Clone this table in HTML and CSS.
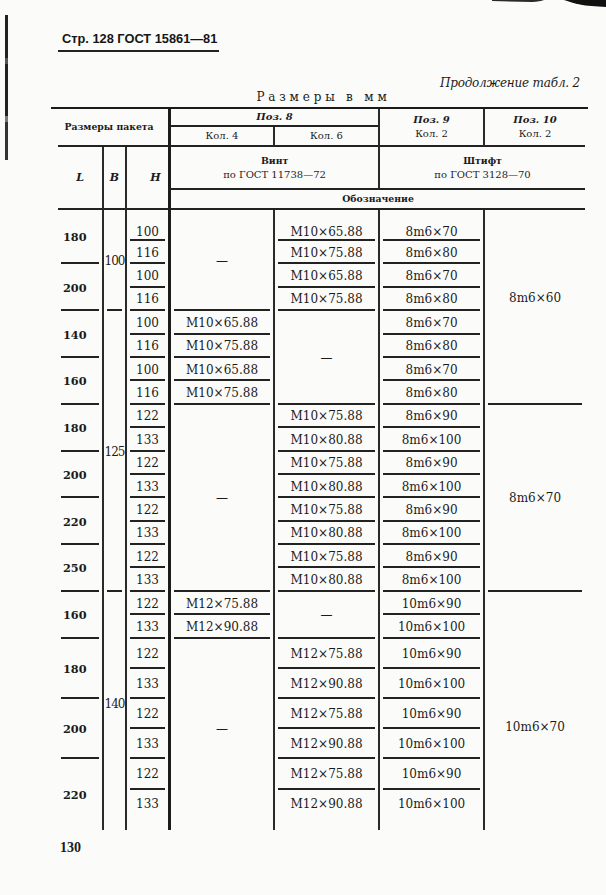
FILE: index.html
```html
<!DOCTYPE html>
<html lang="ru">
<head>
<meta charset="utf-8">
<title>ГОСТ 15861—81, стр. 128</title>
<link rel="stylesheet" href="styles.css">
</head>
<body>
<div class="scan-edge"></div>
<svg class="scan-corner" viewBox="0 0 120 10" aria-hidden="true">
  <path d="M6 0 H58 Q54 1.6 46 2 L6 1 Z" fill="#2a2a2a"/>
  <path d="M78 0 H120 V7 Q104 6.6 94 4.6 Q84 2.2 78 0 Z" fill="#111"/>
</svg>
<main class="page">
  <div class="runhead">Стр. 128 ГОСТ 15861—81</div>
  <div class="cont">Продолжение табл. 2</div>
  <div class="units">Размеры в мм</div>
  <div class="rule"></div>
  <table class="t">
    <colgroup>
      <col class="c-l"><col class="c-b"><col class="c-h"><col class="c-k4"><col class="c-k6"><col class="c-p9"><col class="c-p10">
    </colgroup>
    <thead>
      <tr class="hA">
        <th colspan="3" rowspan="2" class="hb bb pk">Размеры пакета</th>
        <th colspan="2" class="vl3 bb"><span class="poz">Поз. 8</span></th>
        <th rowspan="2" class="vl bb"><span class="poz">Поз. 9</span><br>Кол. 2</th>
        <th rowspan="2" class="vl bb"><span class="poz">Поз. 10</span><br>Кол. 2</th>
      </tr>
      <tr class="hB">
        <th class="vl3 bb">Кол. 4</th>
        <th class="vl bb">Кол. 6</th>
      </tr>
      <tr class="hC">
        <th rowspan="2" class="bb ax">L</th>
        <th rowspan="2" class="vl bb ax">B</th>
        <th rowspan="2" class="vl bb ax hh">H</th>
        <th colspan="2" class="vl3 bb"><span class="hb">Винт</span><br>по ГОСТ 11738—72</th>
        <th colspan="2" class="vl bb"><span class="hb">Штифт</span><br>по ГОСТ 3128—70</th>
      </tr>
      <tr class="hD">
        <th colspan="4" class="vl3 bb hb">Обозначение</th>
      </tr>
    </thead>
    <tbody>
      <tr class="r1">
        <td rowspan="2" class="lv u">180</td>
        <td rowspan="4" class="vl u bv">100</td>
        <td class="vl u p1">100</td>
        <td rowspan="4" class="vl3 u">—</td>
        <td class="vl u p1">M10×65.88</td>
        <td class="vl u p1">8m6×70</td>
        <td rowspan="8" class="vl u pz1">8m6×60</td>
      </tr>
      <tr class="r"><td class="vl u">116</td><td class="vl u">M10×75.88</td><td class="vl u">8m6×80</td></tr>
      <tr class="r"><td rowspan="2" class="lv u">200</td><td class="vl u">100</td><td class="vl u">M10×65.88</td><td class="vl u">8m6×70</td></tr>
      <tr class="r"><td class="vl u">116</td><td class="vl u">M10×75.88</td><td class="vl u">8m6×80</td></tr>
      <tr class="r">
        <td rowspan="2" class="lv u">140</td>
        <td rowspan="12" class="vl u bv">125</td>
        <td class="vl u">100</td>
        <td class="vl3 u">M10×65.88</td>
        <td rowspan="4" class="vl u">—</td>
        <td class="vl u">8m6×70</td>
      </tr>
      <tr class="r"><td class="vl u">116</td><td class="vl3 u">M10×75.88</td><td class="vl u">8m6×80</td></tr>
      <tr class="r"><td rowspan="2" class="lv u">160</td><td class="vl u">100</td><td class="vl3 u">M10×65.88</td><td class="vl u">8m6×70</td></tr>
      <tr class="r"><td class="vl u">116</td><td class="vl3 u">M10×75.88</td><td class="vl u">8m6×80</td></tr>
      <tr class="r">
        <td rowspan="2" class="lv u">180</td>
        <td class="vl u">122</td>
        <td rowspan="8" class="vl3 u">—</td>
        <td class="vl u">M10×75.88</td>
        <td class="vl u">8m6×90</td>
        <td rowspan="8" class="vl u">8m6×70</td>
      </tr>
      <tr class="r"><td class="vl u">133</td><td class="vl u">M10×80.88</td><td class="vl u">8m6×100</td></tr>
      <tr class="r"><td rowspan="2" class="lv u">200</td><td class="vl u">122</td><td class="vl u">M10×75.88</td><td class="vl u">8m6×90</td></tr>
      <tr class="r"><td class="vl u">133</td><td class="vl u">M10×80.88</td><td class="vl u">8m6×100</td></tr>
      <tr class="r"><td rowspan="2" class="lv u">220</td><td class="vl u">122</td><td class="vl u">M10×75.88</td><td class="vl u">8m6×90</td></tr>
      <tr class="r"><td class="vl u">133</td><td class="vl u">M10×80.88</td><td class="vl u">8m6×100</td></tr>
      <tr class="r"><td rowspan="2" class="lv u">250</td><td class="vl u">122</td><td class="vl u">M10×75.88</td><td class="vl u">8m6×90</td></tr>
      <tr class="r"><td class="vl u">133</td><td class="vl u">M10×80.88</td><td class="vl u">8m6×100</td></tr>
      <tr class="r">
        <td rowspan="2" class="lv u">160</td>
        <td rowspan="8" class="vl bv b140">140</td>
        <td class="vl u">122</td>
        <td class="vl3 u">M12×75.88</td>
        <td rowspan="2" class="vl u">—</td>
        <td class="vl u">10m6×90</td>
        <td rowspan="8" class="vl pz3">10m6×70</td>
      </tr>
      <tr class="r"><td class="vl u">133</td><td class="vl3 u">M12×90.88</td><td class="vl u">10m6×100</td></tr>
      <tr class="rw">
        <td rowspan="2" class="lv u">180</td>
        <td class="vl u">122</td>
        <td rowspan="6" class="vl3 k4last">—</td>
        <td class="vl u">M12×75.88</td>
        <td class="vl u">10m6×90</td>
      </tr>
      <tr class="rw"><td class="vl u">133</td><td class="vl u">M12×90.88</td><td class="vl u">10m6×100</td></tr>
      <tr class="rw"><td rowspan="2" class="lv u">200</td><td class="vl u">122</td><td class="vl u">M12×75.88</td><td class="vl u">10m6×90</td></tr>
      <tr class="rw"><td class="vl u">133</td><td class="vl u">M12×90.88</td><td class="vl u">10m6×100</td></tr>
      <tr class="rw2"><td rowspan="2" class="lv l220">220</td><td class="vl u">122</td><td class="vl u">M12×75.88</td><td class="vl u">10m6×90</td></tr>
      <tr class="rl"><td class="vl">133</td><td class="vl">M12×90.88</td><td class="vl">10m6×100</td></tr>
    </tbody>
  </table>
  <div class="folio">130</div>
</main>
</body>
</html>
```

FILE: styles.css
```css
html, body {
  margin: 0;
  padding: 0;
}

body {
  width: 606px;
  height: 895px;
  position: relative;
  overflow: hidden;
  background: #fbfbfa;
  color: #1b1b1b;
  font-family: "DejaVu Serif", "Liberation Serif", serif;
}

.scan-edge {
  position: absolute;
  left: 5px;
  top: 15px;
  width: 3px;
  height: 145px;
  background: linear-gradient(#222 0 30%, #555 30% 34%, #222 34% 70%, #777 70% 74%, #333 74% 100%);
}

.scan-corner {
  position: absolute;
  top: 0;
  right: 0;
  width: 120px;
  height: 10px;
}

.page {
  padding: 31px 21px 0 58px;
}

.runhead {
  display: block;
  width: fit-content;
  font: bold 12.8px/16px "Liberation Sans", Arial, sans-serif;
  padding: 0 2px 3px 4px;
  border-bottom: 2px solid #222;
  color: #161616;
}

.cont {
  margin-top: 24px;
  text-align: right;
  padding-right: 5px;
  font: italic 12px/14px "DejaVu Serif", serif;
  letter-spacing: -0.2px;
}

.units {
  text-align: center;
  font-size: 12px;
  line-height: 14px;
  letter-spacing: 3.8px;
  padding-left: 4px;
}

.rule {
  margin: 3px -3px 0 -7px;
  height: 2px;
  background: #1a1a1a;
}

.t {
  border-collapse: separate;
  border-spacing: 0;
  table-layout: fixed;
  width: 527px;
}

.c-l { width: 44px; }
.c-b { width: 23px; }
.c-h { width: 43px; }
.c-k4 { width: 105px; }
.c-k6 { width: 105px; }
.c-p9 { width: 105px; }
.c-p10 { width: 102px; }

.t th,
.t td {
  padding: 0;
  box-sizing: border-box;
  text-align: center;
  vertical-align: middle;
  font-weight: normal;
  white-space: nowrap;
}

.t th {
  font-size: 10px;
  line-height: 14px;
}

.t td {
  font-size: 12px;
  line-height: 14px;
}

.vl { border-left: 2px solid #2a2a2a; }
.vl3 { border-left: 3px solid #1c1c1c; }
.bb { border-bottom: 2px solid #222; }

.t .hb { font-weight: bold; font-size: 9.3px; }
.poz { font-style: italic; font-weight: bold; }
.t th.pk { padding-right: 8px; }
.t th.ax { font-style: italic; font-weight: bold; font-size: 11px; }
.t th.hh { padding-left: 16px; }

.hA { height: 18px; }
.hB { height: 20px; }
.hC { height: 43px; }
.hD { height: 20px; }

.r1 { height: 31px; }
.r { height: 23.4px; }
.rw { height: 30px; }
.rw2 { height: 31px; }
.rl { height: 40px; }

.u {
  background: linear-gradient(#222, #222) 50% 100% / calc(100% - 6px) 2px no-repeat;
}

.t td.p1 { padding-top: 12px; }
.t td.lv {
  text-align: left;
  padding-left: 5px;
  font-weight: bold;
  font-size: 11.3px;
}
.t td.bv { font-size: 12px; letter-spacing: -1px; }
.t td.b140 { padding-bottom: 14px; }
.t td.pz1 { padding-bottom: 18px; }
.t td.pz3 { padding-top: 32px; }
.t td.k4last { padding-bottom: 10px; }
.t td.l220 { padding-top: 2px; }
.t .rl td { padding-bottom: 12px; }

.folio {
  margin-top: 10px;
  padding-left: 2px;
  font: bold 14px/16px "Liberation Serif", serif;
}
```
